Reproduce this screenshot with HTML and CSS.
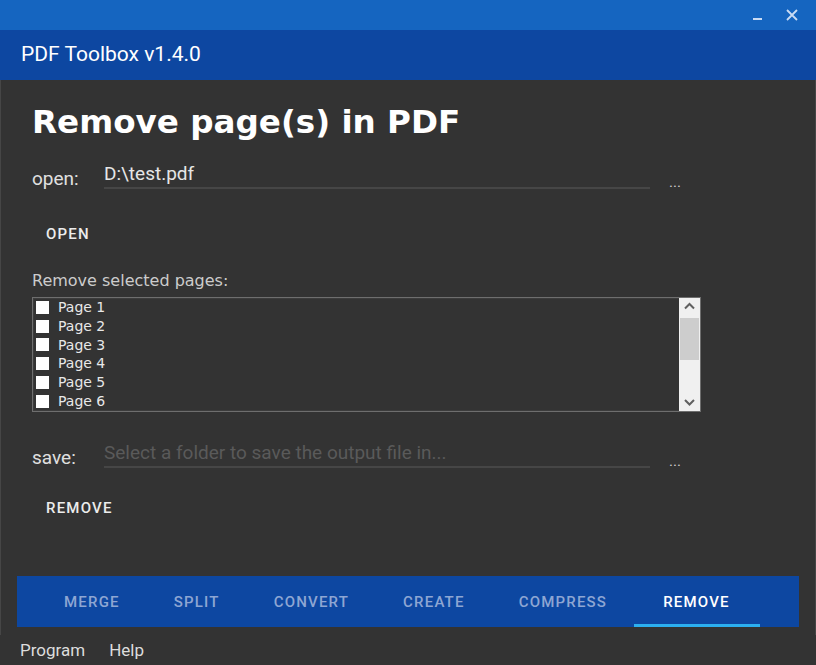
FILE: index.html
```html
<!DOCTYPE html>
<html>
<head>
<meta charset="utf-8">
<link rel="stylesheet" href="styles.css">
</head>
<body>
<div class="window">
  <div class="titlebar">
    <svg class="tb-icon" width="14" height="14" viewBox="0 0 14 14"><rect x="2" y="10" width="9" height="2" fill="#c9dbf3"/></svg>
    <svg class="tb-icon close" width="14" height="14" viewBox="0 0 14 14"><path d="M2 2 L12 12 M12 2 L2 12" stroke="#c9dbf3" stroke-width="1.8"/></svg>
  </div>
  <div class="appbar">PDF Toolbox v1.4.0</div>
  <div class="content">
    <div class="form">
      <h1 class="title">Remove page(s) in PDF</h1>
      <div class="field-row open-row">
        <span class="field-label">open:</span>
        <div class="field-input">D:\test.pdf</div>
        <span class="dots">...</span>
      </div>
      <div class="btn-row"><span class="btn">OPEN</span></div>
      <div class="list-label">Remove selected pages:</div>
      <div class="listbox">
        <div class="items">
          <div class="item"><span class="cb"></span>Page 1</div>
          <div class="item"><span class="cb"></span>Page 2</div>
          <div class="item"><span class="cb"></span>Page 3</div>
          <div class="item"><span class="cb"></span>Page 4</div>
          <div class="item"><span class="cb"></span>Page 5</div>
          <div class="item"><span class="cb"></span>Page 6</div>
        </div>
        <div class="scrollbar">
          <svg class="arrow" width="21" height="17" viewBox="0 0 21 17"><path d="M6 10.5 L10.5 6 L15 10.5" fill="none" stroke="#606060" stroke-width="2"/></svg>
          <div class="thumb"></div>
          <div class="track"></div>
          <svg class="arrow" width="21" height="17" viewBox="0 0 21 17"><path d="M6 6 L10.5 10.5 L15 6" fill="none" stroke="#606060" stroke-width="2"/></svg>
        </div>
      </div>
      <div class="field-row save-row">
        <span class="field-label">save:</span>
        <div class="field-input placeholder">Select a folder to save the output file in...</div>
        <span class="dots">...</span>
      </div>
      <div class="btn-row remove-row"><span class="btn">REMOVE</span></div>
    </div>
    <div class="tabs">
      <span class="tab">MERGE</span>
      <span class="tab">SPLIT</span>
      <span class="tab">CONVERT</span>
      <span class="tab">CREATE</span>
      <span class="tab">COMPRESS</span>
      <span class="tab active">REMOVE</span>
    </div>
  </div>
  <div class="menubar">
    <span class="menu">Program</span>
    <span class="menu">Help</span>
  </div>
</div>
</body>
</html>
```
FILE: styles.css
```css
* { box-sizing: border-box; }
html, body { margin: 0; padding: 0; background: #333333; }
.window {
  width: 816px;
  height: 665px;
  display: flex;
  flex-direction: column;
  font-family: Roboto, "Liberation Sans", sans-serif;
  color: #e6e6e6;
  overflow: hidden;
}
.titlebar {
  height: 30px;
  background: #1565c0;
  display: flex;
  justify-content: flex-end;
  align-items: center;
  gap: 20px;
  padding-right: 17px;
}
.tb-icon { display: block; }
.appbar {
  height: 50px;
  background: #0d47a1;
  color: #ffffff;
  font-size: 21px;
  display: flex;
  align-items: center;
  padding-left: 21px;
  padding-bottom: 2px;
}
.content {
  height: 555px;
  border-left: 1px solid #464646;
  border-right: 1px solid #464646;
  padding: 0 16px 8px;
  display: flex;
  flex-direction: column;
}
.form {
  padding-left: 15px;
  display: flex;
  flex-direction: column;
}
.title {
  margin: 21px 0 0;
  height: 42px;
  line-height: 42px;
  font-family: "DejaVu Sans", Verdana, sans-serif;
  font-weight: bold;
  font-size: 32.6px;
  color: #ffffff;
}
.field-row {
  display: flex;
  align-items: center;
  height: 30px;
}
.open-row { margin-top: 18px; }
.save-row { margin-top: 28px; }
.field-label {
  width: 72px;
  font-size: 19px;
  color: #e0e0e0;
  padding-top: 4px;
}
.field-input {
  width: 546px;
  height: 28px;
  line-height: 26px;
  border-bottom: 2px solid #464646;
  font-size: 19px;
  color: #e6e6e6;
  align-self: flex-start;
}
.field-input.placeholder { color: #5a5a5a; }
.dots {
  margin-left: 19px;
  font-size: 15px;
  color: #cfcfcf;
  padding-top: 12px;
}
.btn-row {
  height: 38px;
  margin-top: 24px;
  display: flex;
  align-items: center;
}
.remove-row { margin-top: 19px; }
.btn {
  padding: 0 14px;
  font-size: 15px;
  font-weight: 500;
  letter-spacing: 1.2px;
  color: #ececec;
}
.list-label {
  margin-top: 18px;
  height: 20px;
  line-height: 20px;
  font-family: "DejaVu Sans", Verdana, sans-serif;
  font-size: 16px;
  color: #cccccc;
}
.listbox {
  margin-top: 6px;
  width: 669px;
  height: 115px;
  border: 1px solid #6e6e6e;
  box-shadow: inset 0 0 0 1px #3c3c3c;
  display: flex;
  overflow: hidden;
}
.items {
  flex: 1;
  padding-left: 3px;
}
.item {
  height: 18.8px;
  line-height: 19px;
  display: flex;
  align-items: center;
  font-family: "DejaVu Sans", Verdana, sans-serif;
  font-size: 14px;
  color: #e8e8e8;
}
.cb {
  width: 13px;
  height: 13px;
  background: #ffffff;
  margin-right: 9px;
}
.scrollbar {
  width: 21px;
  background: #f0f0f0;
  display: flex;
  flex-direction: column;
}
.arrow { display: block; flex: none; }
.thumb {
  height: 42px;
  margin: 3px 1px 0;
  background: #cdcdcd;
}
.track { flex: 1; }
.tabs {
  margin-top: auto;
  height: 51px;
  background: #0d47a1;
  display: flex;
  padding-left: 20px;
}
.tab {
  position: relative;
  padding: 0 27px;
  display: flex;
  align-items: center;
  font-size: 15px;
  font-weight: 500;
  letter-spacing: 1.2px;
  color: #8ea6d3;
}
.tab.active {
  color: #ffffff;
  padding: 0 30px 0 29px;
}
.tab.active::after {
  content: "";
  position: absolute;
  left: 0;
  right: 0;
  bottom: 0;
  height: 3px;
  background: #2cb0f0;
}
.menubar {
  height: 30px;
  display: flex;
  align-items: center;
  gap: 24px;
  padding-left: 20px;
}
.menu {
  font-size: 17px;
  color: #dddddd;
}
```
